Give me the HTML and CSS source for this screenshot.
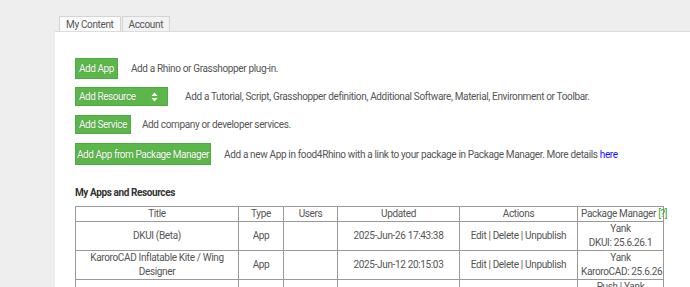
FILE: index.html
```html
<!DOCTYPE html>
<html lang="en">
    <head>
        <meta charset="UTF-8" />
        <title>My Content</title>
        <link rel="stylesheet" href="styles.css">
    </head>
    <body>
        <div class="tabs">
            <a class="tab active">My Content</a>
            <a class="tab">Account</a>
        </div>
        <div class="panel">
            <div class="add-row">
                <a class="button btn-app">Add App</a>
                <span class="desc">Add a Rhino or Grasshopper plug-in.</span>
            </div>
            <div class="add-row">
                <a class="button btn-resource">Add Resource
                    <svg class="updown" width="7" height="10" viewBox="0 0 7 10">
                        <path d="M3.5 0.5 L6.5 4 L0.5 4 Z M0.5 6 L6.5 6 L3.5 9.5 Z" fill="#fff" />
                    </svg>
                </a>
                <span class="desc">Add a Tutorial, Script, Grasshopper definition, Additional Software, Material, Environment or Toolbar.</span>
            </div>
            <div class="add-row">
                <a class="button btn-service">Add Service</a>
                <span class="desc">Add company or developer services.</span>
            </div>
            <div class="add-row">
                <a class="button btn-package">Add App from Package Manager</a>
                <span class="desc">Add a new App in food4Rhino with a link to your package in Package Manager. More details <a class="link" href="#">here</a></span>
            </div>

            <h3>My Apps and Resources</h3>
            <table class="apps">
                <tr class="head">
                    <th class="c-title">Title</th>
                    <th class="c-type">Type</th>
                    <th class="c-users">Users</th>
                    <th class="c-updated">Updated</th>
                    <th class="c-actions">Actions</th>
                    <th class="c-pm">Package Manager <span class="help">[?]</span></th>
                </tr>
                <tr>
                    <td>DKUI (Beta)</td>
                    <td>App</td>
                    <td></td>
                    <td>2025-Jun-26 17:43:38</td>
                    <td>Edit | Delete | Unpublish</td>
                    <td class="pm">Yank<br>DKUI: 25.6.26.1</td>
                </tr>
                <tr>
                    <td>KaroroCAD Inflatable Kite / Wing Designer</td>
                    <td>App</td>
                    <td></td>
                    <td>2025-Jun-12 20:15:03</td>
                    <td>Edit | Delete | Unpublish</td>
                    <td class="pm">Yank<br>KaroroCAD: 25.6.26</td>
                </tr>
                <tr>
                    <td>&nbsp;</td>
                    <td></td>
                    <td></td>
                    <td></td>
                    <td></td>
                    <td class="pm">Push | Yank<br>&nbsp;</td>
                </tr>
            </table>
        </div>
    </body>
</html>
```

FILE: styles.css
```css
body {
    margin: 0;
    background-color: #eeeeee;
    font-family: Roboto, "Liberation Sans", sans-serif;
    font-size: 10px;
    letter-spacing: -0.35px;
    color: #555;
    overflow: hidden;
}
.tabs {
    display: flex;
    padding: 16px 0 0 59px;
    gap: 1px;
}
.tab {
    display: block;
    padding: 0 6px;
    height: 14px;
    line-height: 15px;
    border: 1px solid #d4d4d4;
    border-bottom: none;
    background-color: #f2f2f2;
    color: #555;
}
.tab.active {
    background-color: #fbfbfb;
}
.panel {
    margin-left: 55px;
    background-color: #ffffff;
    border-top: 1px solid #dcdcdc;
    padding: 26px 0 0 20px;
    height: 300px;
}
.add-row {
    display: flex;
    align-items: center;
    margin-bottom: 9px;
    white-space: nowrap;
}
.add-row:first-child {
    margin-bottom: 8px;
}
.button {
    display: inline-flex;
    align-items: center;
    box-sizing: border-box;
    background-color: #5cb74b;
    border: 1px solid #52a843;
    color: #fff;
    font-size: 10px;
    letter-spacing: -0.45px;
    text-shadow: 0 0 1px rgba(0, 0, 0, 0.35);
    padding: 0 3px;
    height: 19px;
    margin-right: 13px;
}
.btn-app {
    height: 21px;
}
.btn-resource {
    width: 93px;
    justify-content: space-between;
    margin-right: 17px;
}
.btn-service {
    margin-right: 11px;
}
.btn-package {
    height: 22px;
    width: 136px;
    justify-content: center;
}
.updown {
    margin-right: 6px;
}
.link {
    color: #1a0dff;
    text-decoration: none;
}
h3 {
    margin: 22px 0 8px 0;
    font-size: 10px;
    font-weight: bold;
    letter-spacing: -0.4px;
    color: #333;
}
.apps {
    border-collapse: collapse;
    table-layout: fixed;
    width: 589px;
}
.apps th,
.apps td {
    border: 1px solid #999;
    text-align: center;
    font-weight: normal;
    padding: 0 3px;
    line-height: 14px;
    white-space: nowrap;
}
.apps td:first-child {
    white-space: normal;
}
.apps .head th {
    height: 14px;
}
.apps td {
    height: 27px;
}
.c-title { width: 156px; }
.c-type { width: 38px; }
.c-users { width: 47px; }
.c-updated { width: 115px; }
.c-actions { width: 111px; }
.pm {
    border-left: 2px solid #bbb;
}
.help {
    color: #3aa52a;
}
```
